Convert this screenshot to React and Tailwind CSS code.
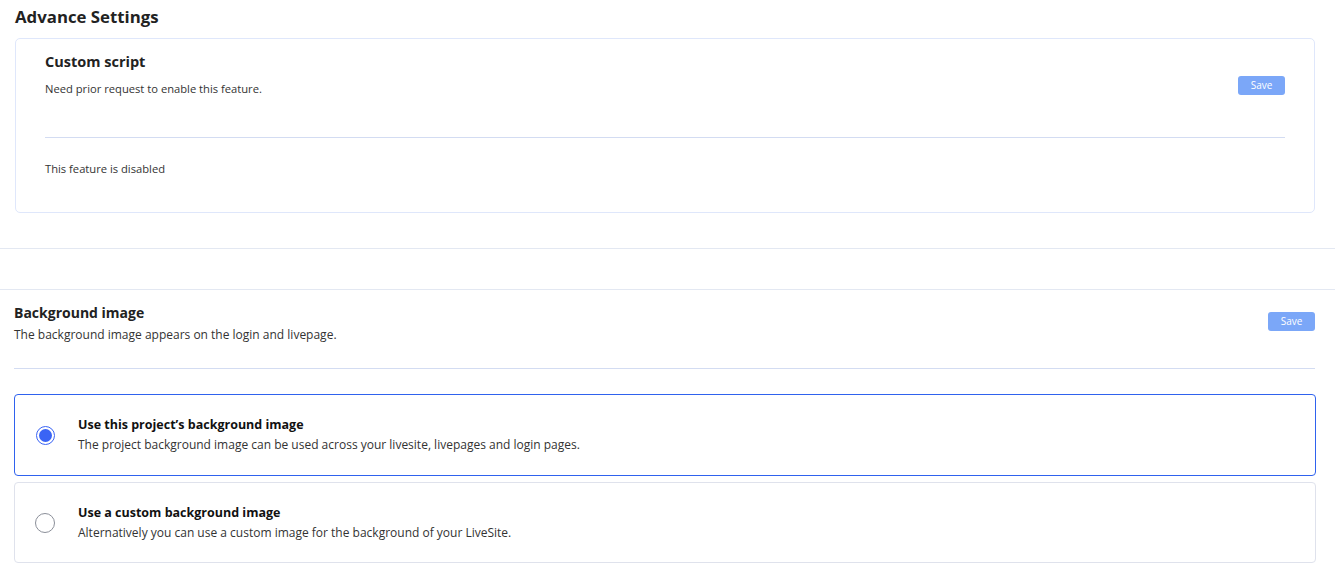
import { useState } from 'react'

// ── Radio option card ─────────────────────────────────────────────────────────

function OptionCard({ selected, title, desc, onSelect, className = '' }) {
  return (
    <button
      type="button"
      onClick={onSelect}
      className={`flex w-full items-center rounded-[4px] border bg-white text-left ${
        selected ? 'border-[#2f62ee]' : 'border-[#dfe2ec]'
      } ${className}`}
    >
      <span className="flex w-[63px] shrink-0 justify-center pr-[3px]">
        {selected ? (
          <span className="flex h-[19px] w-[19px] items-center justify-center rounded-full border-[1.5px] border-[#3a64f5] bg-white">
            <span className="h-[13px] w-[13px] rounded-full bg-[#3a64f5]" />
          </span>
        ) : (
          <span className="h-[20px] w-[20px] rounded-full border border-[#8b8f99] bg-white" />
        )}
      </span>
      <span className="flex flex-col">
        <span className="text-[12.5px] font-bold leading-[16px] text-[#111]">{title}</span>
        <span className="mt-[4px] text-[12px] leading-[16px] text-[#333]">{desc}</span>
      </span>
    </button>
  )
}

// ── Page ──────────────────────────────────────────────────────────────────────

export default function App() {
  const [choice, setChoice] = useState('project')

  return (
    <div className="min-h-[573px] bg-white font-['Open_Sans',sans-serif] text-[#2b2b2b]">
      <h1 className="px-[15px] pt-[6px] text-[16.8px] font-bold leading-[22px] text-[#222]">Advance Settings</h1>

      <div className="mx-[15px] mt-[10px] w-[1300px] rounded-[5px] border border-[#dfe7fb] px-[29px] pt-[13px] pb-[36px]">
        <div className="flex items-start justify-between">
          <div>
            <h2 className="text-[14.5px] font-bold leading-[20px] text-[#222]">Custom script</h2>
            <p className="mt-[9px] text-[11.2px] leading-[15px] text-[#333]">Need prior request to enable this feature.</p>
          </div>
          <button
            type="button"
            className="mt-[24px] h-[19px] w-[47px] rounded-[3px] bg-[#7ba7f8] text-[10px] leading-[19px] text-white"
          >
            Save
          </button>
        </div>
        <div className="mt-[41px] border-t border-[#d3dcf2]" />
        <p className="mt-[23px] text-[11.2px] leading-[15px] text-[#333]">This feature is disabled</p>
      </div>

      <div className="mt-[35px] border-t border-[#e3e8f2]" />
      <div className="mt-[40px] border-t border-[#e3e8f2]" />

      <div className="px-[14px] pt-[14px]">
        <div className="flex items-start justify-between">
          <div>
            <h2 className="text-[14px] font-bold leading-[18px] text-[#222]">Background image</h2>
            <p className="mt-[4px] text-[12px] leading-[17px] text-[#333]">The background image appears on the login and livepage.</p>
          </div>
          <button
            type="button"
            className="mt-[8px] mr-[6px] h-[19px] w-[47px] rounded-[3px] bg-[#7ba7f8] text-[10px] leading-[19px] text-white"
          >
            Save
          </button>
        </div>
        <div className="mt-[25px] w-[1301px] border-t border-[#d3dcf2]" />

        <div className="mt-[25px] flex w-[1302px] flex-col gap-[6px]">
          <OptionCard
            className="h-[82px]"
            selected={choice === 'project'}
            onSelect={() => setChoice('project')}
            title="Use this project’s background image"
            desc="The project background image can be used across your livesite, livepages and login pages."
          />
          <OptionCard
            className="h-[81px]"
            selected={choice === 'custom'}
            onSelect={() => setChoice('custom')}
            title="Use a custom background image"
            desc="Alternatively you can use a custom image for the background of your LiveSite."
          />
        </div>
      </div>
    </div>
  )
}
